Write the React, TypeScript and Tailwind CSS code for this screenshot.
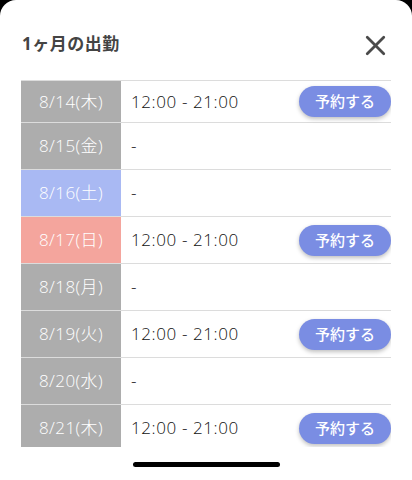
import { X } from 'lucide-react';

type Shift = {
  date: string;
  kind: 'weekday' | 'sat' | 'sun';
  time?: string;
};

const SHIFTS: Shift[] = [
  { date: '8/14(木)', kind: 'weekday', time: '12:00 - 21:00' },
  { date: '8/15(金)', kind: 'weekday' },
  { date: '8/16(土)', kind: 'sat' },
  { date: '8/17(日)', kind: 'sun', time: '12:00 - 21:00' },
  { date: '8/18(月)', kind: 'weekday' },
  { date: '8/19(火)', kind: 'weekday', time: '12:00 - 21:00' },
  { date: '8/20(水)', kind: 'weekday' },
  { date: '8/21(木)', kind: 'weekday', time: '12:00 - 21:00' },
];

const CELL_BG: Record<Shift['kind'], string> = {
  weekday: 'bg-[#adadad]',
  sat: 'bg-[#a9b9f3]',
  sun: 'bg-[#f4a59d]',
};

const FONT = { fontFamily: '"Open Sans", "Noto Sans CJK JP", sans-serif' };

export default function App() {
  return (
    <div className="h-[480px] w-[412px] bg-black" style={FONT}>
      <div className="flex h-full flex-col rounded-t-[16px] bg-white">
        {/* Header */}
        <div className="flex h-[80px] items-start justify-between pl-[22px] pr-[20px] pt-[31px]">
          <h2 className="text-[17px] font-bold leading-[26px] tracking-[0.5px] text-[#444]">1ヶ月の出勤</h2>
          <X className="-mt-[2px] size-[33px] text-[#4a4a4a]" strokeWidth={2} />
        </div>

        {/* Shift list */}
        <div className="mx-[21px] h-[367px] overflow-hidden border-t border-[#dcdcdc]">
          {SHIFTS.map((s, i) => (
            <div
              key={s.date}
              className={`flex border-b border-[#dcdcdc] ${i === 0 ? 'h-[42px]' : 'h-[47px]'}`}
            >
              <div
                className={`flex w-[100px] shrink-0 items-center justify-center text-[17px] font-light tracking-[0.4px] text-white ${CELL_BG[s.kind]}`}
              >
                {s.date}
              </div>
              <div className="flex flex-1 items-center justify-between pl-[10px]">
                <span className="text-[17px] font-light tracking-[0.6px] text-[#111]">{s.time ?? '-'}</span>
                {s.time && (
                  <button
                    type="button"
                    className="h-[31px] w-[92px] rounded-full bg-[#7a8de3] text-[15px] font-medium text-white shadow-[0_2px_4px_rgba(0,0,0,0.25)]"
                  >
                    予約する
                  </button>
                )}
              </div>
            </div>
          ))}
        </div>

        {/* Home indicator */}
        <div className="flex flex-1 items-center justify-center pt-[1px]">
          <div className="h-[5px] w-[147px] rounded-full bg-black" />
        </div>
      </div>
    </div>
  );
}
